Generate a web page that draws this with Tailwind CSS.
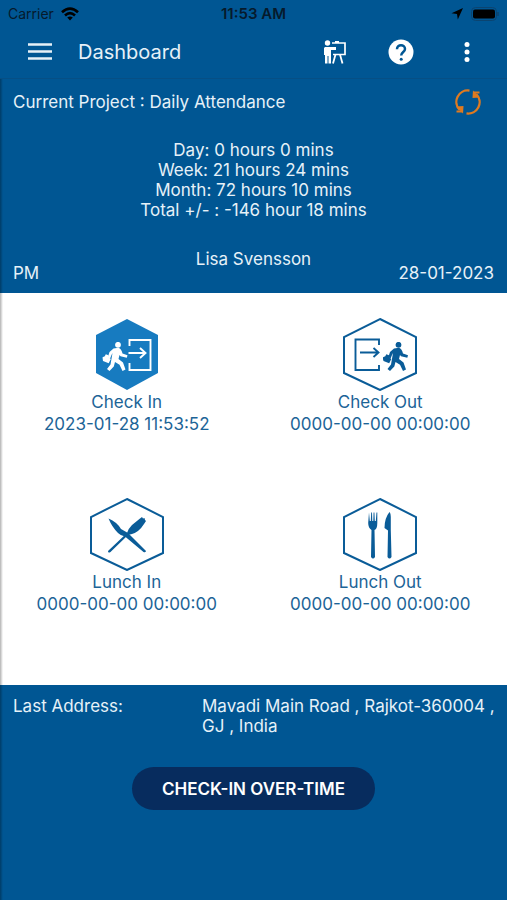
<!DOCTYPE html>
<html lang="en">
<head>
<meta charset="utf-8">
<meta name="viewport" content="width=device-width, initial-scale=1">
<title>Dashboard</title>
<script src="https://cdn.jsdelivr.net/npm/@tailwindcss/browser@4"></script>
</head>
<body class="flex min-h-screen flex-col bg-[#005693] font-['Inter',sans-serif] text-[17px] leading-5 text-[#e6f1f8]">
<svg class="hidden" aria-hidden="true">
  <symbol id="walker" viewBox="0 0 26 30" overflow="visible">
    <circle cx="15.500" cy="2.800" r="2.900"/>
    <path d="M11 6.500 L16 5.700 Q19 7 20 11.500 L25 13.200 L24.300 15.700 L18 14.300 L17 13 L16 17 L20.500 20.500 L23 27.500 L20 29 L17 22.800 L12.500 20 L11.300 24.500 L7 29 L4.500 27 L8 22.500 L10 11 L9 13 L7.700 16.300 L5.200 15.500 L7 10 Z"/>
    <path d="M-0.500 15.500 L2.300 14.300 L3.300 12.300 L6 13.300 L6.200 15.300 L8.300 17 L6.200 21.300 L0.500 19 Z"/>
  </symbol>
</svg>

<div class="grid h-7 grid-cols-[1fr_auto_1fr] items-center px-2 text-sm text-[#061a2c]">
  <div class="flex items-center gap-1.5">
    <span>Carrier</span>
    <svg class="h-4 w-5" viewBox="0 0 20 16" fill="none" stroke="#000" stroke-width="2.700" aria-label="Wi-Fi">
      <path d="M2 6.200 Q10 -1 18 6.200"/><path d="M5 9.400 Q10 5 15 9.400"/><path d="M10 14.500 L7.200 11.600 Q10 9.300 12.800 11.600 Z" fill="#000" stroke="none"/>
    </svg>
  </div>
  <span class="text-[15px] font-semibold">11:53 AM</span>
  <div class="flex items-center justify-end gap-2">
    <svg class="size-3" viewBox="0 0 12 12" fill="#000" aria-hidden="true"><path d="M12 0 L6.800 11.500 L6 6 L0.500 5.300 Z"/></svg>
    <svg class="h-3.5 w-7" viewBox="0 0 28 14" aria-hidden="true"><rect x=".5" y=".5" width="25" height="13" rx="4" fill="none" stroke="#0b4470"/><rect x="2" y="2.500" width="22" height="9" rx="2" fill="#000"/><path d="M27 5 V9" stroke="#0b4470" stroke-width="1.500"/></svg>
  </div>
</div>

<header class="flex h-[51px] items-center px-6 pb-1">
  <button type="button" aria-label="Menu" class="flex size-8 items-center justify-center">
    <svg class="h-[17px] w-6" viewBox="0 0 24 17" stroke="currentColor" stroke-width="2.400"><path d="M0 1.500H24M0 8.500H24M0 15.500H24"/></svg>
  </button>
  <h1 class="ml-[22px] flex-1 text-xl">Dashboard</h1>
  <div class="flex items-center gap-[34px] text-white">
    <button type="button" aria-label="Training" class="flex size-8 items-center justify-center">
      <svg class="h-6 w-6" viewBox="0 0 24 24" fill="none" stroke="currentColor">
        <circle cx="4.500" cy="3" r="2.700" fill="currentColor" stroke="none"/>
        <path d="M2 7H13V10H8V23.500H5.500V16H4.500V23.500H2V15H1V8Z" fill="currentColor" stroke="none"/>
        <path d="M9 3H22V14.500H10" stroke-width="1.700"/><path d="M12 2H16" stroke-width="2"/><path d="M12.500 14.500L10 23.500M17 14.500L19.500 23.500" stroke-width="1.800"/>
      </svg>
    </button>
    <button type="button" aria-label="Help" class="flex size-8 items-center justify-center">
      <svg class="size-[26px]" viewBox="0 0 26 26"><circle cx="13" cy="13" r="12.500" fill="currentColor"/><path d="M9 10.200C9 4.800 17 4.900 17 10C17 13 13.200 13 13.200 16.500" fill="none" stroke="#005693" stroke-width="2.500"/><circle cx="13.200" cy="20.200" r="1.500" fill="#005693"/></svg>
    </button>
    <button type="button" aria-label="More options" class="flex size-8 items-center justify-center">
      <svg class="h-6 w-2" viewBox="0 0 8 24" fill="currentColor"><circle cx="4" cy="4.500" r="2.500"/><circle cx="4" cy="12" r="2.500"/><circle cx="4" cy="19.500" r="2.500"/></svg>
    </button>
  </div>
</header>

<main class="relative flex flex-1 flex-col shadow-[0_-1px_0_#064f85]">
  <div class="absolute inset-y-0 left-0 w-[3px] bg-linear-to-r from-black/30 to-black/0" aria-hidden="true"></div>
  <section class="px-[13px] pb-2.5">
    <div class="flex h-[46px] items-center justify-between pr-[13px]">
      <p>Current Project : Daily Attendance</p>
      <button type="button" aria-label="Refresh" class="text-[#df7a20]">
        <svg class="size-[26px]" viewBox="0 0 26 26" fill="none" stroke="currentColor" stroke-width="2.300">
          <path d="M14.500 1.600A11.400 11.400 0 0 0 4.800 21"/><path d="M11.500 24.400A11.400 11.400 0 0 0 21.200 5"/>
          <path d="M1 17.500L8.500 17L8 24.500Z" fill="currentColor" stroke="none"/><path d="M25 8.500L17.500 9L18 1.500Z" fill="currentColor" stroke="none"/>
          <path d="M1.500 22.500H7M24.500 3.500H19" stroke-width="1.800"/>
        </svg>
      </button>
    </div>
    <div class="mt-[15px] text-center">
      <p>Day: 0 hours 0 mins</p>
      <p>Week: 21 hours 24 mins</p>
      <p>Month: 72 hours 10 mins</p>
      <p>Total +/- : -146 hour 18 mins</p>
    </div>
    <div class="mt-[29px] grid grid-cols-[1fr_auto_1fr] items-end">
      <p>PM</p>
      <p class="pb-3.5">Lisa Svensson</p>
      <p class="text-right">28-01-2023</p>
    </div>
  </section>

  <section class="grid grid-cols-2 gap-y-[62px] bg-white pt-6 pb-[70px] leading-[22px] text-[#1c6497]">
    <button type="button" class="flex flex-col items-center">
      <svg class="size-[74px]" viewBox="0 0 74 74" fill="none" aria-hidden="true">
        <path d="M37 2L68 18V56L37 73L6 56V18Z" fill="#177bc0"/>
        <svg x="12.500" y="25" width="26" height="30" viewBox="0 0 26 30" fill="#fff"><use href="#walker" width="26" height="30"/></svg>
        <path d="M39.500 29V23H60.500V53H39.500V46M38.500 36H55M50 31L55.500 36L50 41" stroke="#fff" stroke-width="1.900"/>
      </svg>
      <span>Check In</span><span>2023-01-28 11:53:52</span>
    </button>
    <button type="button" class="flex flex-col items-center">
      <svg class="size-[74px]" viewBox="0 0 74 74" fill="none" aria-hidden="true">
        <path d="M37 2L73 20V56L37 73L1 56V20Z" stroke="#0a5c98" stroke-width="2"/>
        <svg x="40" y="25" width="26" height="30" viewBox="0 0 26 30" fill="#0a5c98"><use href="#walker" width="26" height="30"/></svg>
        <path d="M36 28V22.500H12.500V53H36V48M17 35.500H35M30.500 31L35.500 35.500L30.500 40" stroke="#0a5c98" stroke-width="1.900"/>
      </svg>
      <span>Check Out</span><span>0000-00-00 00:00:00</span>
    </button>
    <button type="button" class="flex flex-col items-center">
      <svg class="size-[74px]" viewBox="0 0 74 74" fill="none" aria-hidden="true">
        <path d="M37 2L73 20V56L37 73L1 56V20Z" stroke="#0a5c98" stroke-width="2"/>
        <g fill="#0a5c98" transform="translate(0 1)"><path d="M18.500 20.500Q27 24 31 31L38 35L56 53Q55.500 55 53.500 54L35 38.500Q31 38 28 35Q22 29 18.500 20.500Z"/>
        <path d="M50 20.500L52 19L53 20.500L54.500 20L55 22L56 23L54 26Q49 34 42 36L38 37L20.500 54Q18 55.500 18 53L37 35Q38 31 42 27Z"/></g>
      </svg>
      <span>Lunch In</span><span>0000-00-00 00:00:00</span>
    </button>
    <button type="button" class="flex flex-col items-center">
      <svg class="size-[74px]" viewBox="0 0 74 74" fill="none" aria-hidden="true">
        <path d="M37 2L73 20V56L37 73L1 56V20Z" stroke="#0a5c98" stroke-width="2"/>
        <g fill="#0a5c98" transform="translate(0 1)"><path d="M26 14.500L26.800 23H27.800L28.200 14.500H29L29.300 23H30.300L30.600 14.500H31.400L31.800 23H32.800L33.500 14.500H34.300V25Q34.300 31 31.500 32L32 59Q30 62 28 59L28.500 32Q25.200 30 25.200 25Z"/>
        <path d="M46.500 14Q48 15 47.800 22V32L48.500 59Q46.500 62 44.500 59L45 32.500L41.500 30Q41.500 20 46.500 14Z"/></g>
      </svg>
      <span>Lunch Out</span><span>0000-00-00 00:00:00</span>
    </button>
  </section>

  <section class="pt-[11px]">
    <div class="grid grid-cols-[189px_1fr] pr-1 pl-[13px]">
      <p>Last Address:</p>
      <p>Mavadi Main Road , Rajkot-360004 , GJ , India</p>
    </div>
    <div class="mt-[31px] flex justify-center">
      <button type="button" class="h-[43px] rounded-full bg-[#072c5e] px-[30px] font-semibold text-white">CHECK-IN OVER-TIME</button>
    </div>
  </section>
</main>
</body>
</html>
